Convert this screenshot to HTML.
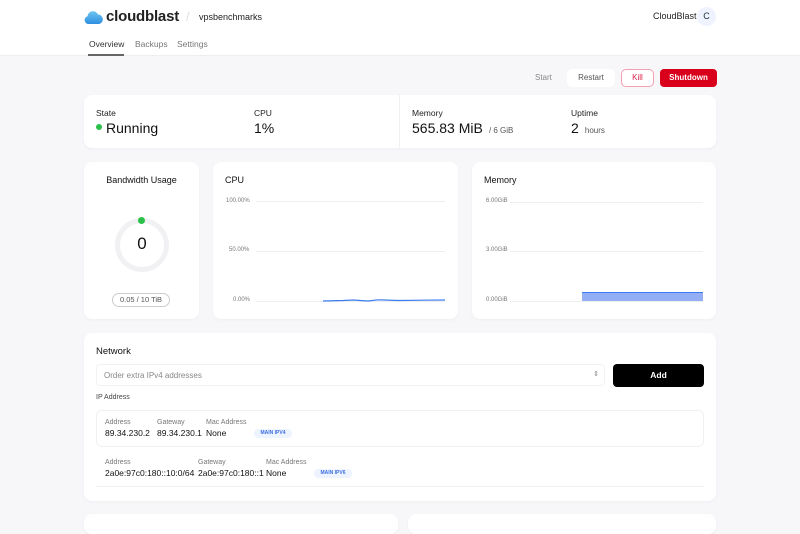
<!DOCTYPE html>
<html><head><style>
*{box-sizing:border-box;margin:0;padding:0}
body{width:800px;height:523px;overflow:hidden;background:#f7f7fa;font-family:"Liberation Sans",sans-serif;color:#111;position:relative}
.a{position:absolute}
.card{position:absolute;background:#fff;border-radius:8px;box-shadow:0 1px 3px rgba(0,0,0,.04)}
.lbl{font-size:8.5px;color:#555}
.sm{font-size:7px;color:#777}
</style></head><body>
<div class="a" style="left:0;top:0;width:800px;height:56px;background:#fff;border-bottom:1px solid #eee"></div>
<svg class="a" style="left:84px;top:9px" width="19" height="16" viewBox="0 0 19 16"><defs><linearGradient id="g" x1="0" y1="0" x2="0" y2="1"><stop offset="0" stop-color="#6cc5f0"/><stop offset="1" stop-color="#2f8fe0"/></linearGradient></defs><path d="M4 15 A4 4 0 0 1 3.5 7.2 A5.5 5.5 0 0 1 14 5.5 A4.8 4.8 0 0 1 15 15 Z" fill="url(#g)"/></svg>
<div class="a" style="left:106px;top:8px;font-size:15px;font-weight:bold;letter-spacing:-.2px;color:#222">cloudblast</div>
<div class="a" style="left:186px;top:9px;font-size:13px;color:#ddd">/</div>
<div class="a" style="left:199px;top:12px;font-size:9px;color:#222">vpsbenchmarks</div>
<div class="a" style="left:653px;top:11px;font-size:9px;color:#222">CloudBlast</div>
<div class="a" style="left:697px;top:7px;width:19px;height:19px;border-radius:50%;background:#eef3ff;font-size:9px;text-align:center;line-height:19px;color:#234">C</div>
<div class="a" style="left:89px;top:39px;font-size:8.5px;color:#333">Overview</div>
<div class="a" style="left:135px;top:39px;font-size:8.5px;color:#777">Backups</div>
<div class="a" style="left:177px;top:39px;font-size:8.5px;color:#777">Settings</div>
<div class="a" style="left:88px;top:54px;width:36px;height:1.5px;background:#666"></div>

<div class="a" style="left:535px;top:73px;font-size:8px;color:#888">Start</div>
<div class="a" style="left:567px;top:69px;width:48px;height:18px;background:#fff;border-radius:5px;font-size:8px;color:#555;text-align:center;line-height:18px">Restart</div>
<div class="a" style="left:621px;top:69px;width:33px;height:18px;border:1px solid #f3a0b0;border-radius:5px;background:#fff;font-size:8px;color:#e0204a;text-align:center;line-height:16px">Kill</div>
<div class="a" style="left:660px;top:69px;width:57px;height:18px;background:#d8001a;border-radius:4px;font-size:8px;color:#fff;font-weight:bold;text-align:center;line-height:18px">Shutdown</div>

<div class="card" style="left:84px;top:95px;width:632px;height:53px"></div>
<div class="a" style="left:399px;top:95px;width:1px;height:53px;background:#f0f0f0"></div>
<div class="a lbl" style="left:96px;top:108px;color:#222">State</div>
<div class="a" style="left:96px;top:124px;width:6px;height:6px;border-radius:50%;background:#2bc04a"></div>
<div class="a" style="left:106px;top:120px;font-size:14px">Running</div>
<div class="a lbl" style="left:254px;top:108px;color:#222">CPU</div>
<div class="a" style="left:254px;top:120px;font-size:14px">1%</div>
<div class="a lbl" style="left:412px;top:108px;color:#222">Memory</div>
<div class="a" style="left:412px;top:120px;font-size:14px">565.83 MiB <span style="font-size:8px;color:#555">&nbsp;/ 6 GiB</span></div>
<div class="a lbl" style="left:571px;top:108px;color:#222">Uptime</div>
<div class="a" style="left:571px;top:120px;font-size:14px">2 <span style="font-size:8px;color:#555">&nbsp;hours</span></div>

<div class="card" style="left:84px;top:162px;width:115px;height:157px"></div>
<div class="a" style="left:84px;top:175px;width:115px;text-align:center;font-size:9px">Bandwidth Usage</div>
<div class="a" style="left:115px;top:218px;width:54px;height:54px;border-radius:50%;border:5px solid #f1f1f3"></div>
<div class="a" style="left:138px;top:217px;width:7px;height:7px;border-radius:50%;background:#2bc04a"></div>
<div class="a" style="left:115px;top:234px;width:54px;text-align:center;font-size:17px">0</div>
<div class="a" style="left:112px;top:293px;width:58px;height:14px;border:1px solid #ccc;border-radius:8px;font-size:7.5px;color:#555;text-align:center;line-height:12px">0.05 / 10 TiB</div>

<div class="card" style="left:213px;top:162px;width:245px;height:157px"></div>
<div class="a" style="left:225px;top:175px;font-size:9px">CPU</div>
<div class="a sm" style="left:226px;top:198px;font-size:6px">100.00%</div>
<div class="a sm" style="left:229px;top:247px;font-size:6px">50.00%</div>
<div class="a sm" style="left:233px;top:297px;font-size:6px">0.00%</div>
<div class="a" style="left:256px;top:201px;width:189px;height:1px;background:#eee"></div>
<div class="a" style="left:256px;top:251px;width:189px;height:1px;background:#eee"></div>
<div class="a" style="left:256px;top:301px;width:189px;height:1px;background:#eee"></div>
<svg class="a" style="left:323px;top:297px" width="122" height="6"><path d="M0 4 L20 3.5 L30 3 L45 4 L55 2.8 L75 3.5 L100 3.2 L122 3" stroke="#3b7df0" stroke-width="1.2" fill="none"/></svg>

<div class="card" style="left:472px;top:162px;width:244px;height:157px"></div>
<div class="a" style="left:484px;top:175px;font-size:9px">Memory</div>
<div class="a sm" style="left:486px;top:198px;font-size:6px">6.00GiB</div>
<div class="a sm" style="left:486px;top:247px;font-size:6px">3.00GiB</div>
<div class="a sm" style="left:486px;top:297px;font-size:6px">0.00GiB</div>
<div class="a" style="left:510px;top:202px;width:193px;height:1px;background:#eee"></div>
<div class="a" style="left:510px;top:251px;width:193px;height:1px;background:#eee"></div>
<div class="a" style="left:510px;top:301px;width:193px;height:1px;background:#eee"></div>
<div class="a" style="left:582px;top:292px;width:121px;height:9px;background:#94aef5;border-top:1.5px solid #3b7df0"></div>

<div class="card" style="left:84px;top:333px;width:632px;height:168px"></div>
<div class="a" style="left:96px;top:346px;font-size:9.5px">Network</div>
<div class="a" style="left:96px;top:364px;width:509px;height:22px;border:1px solid #f2f2f2;border-radius:4px;font-size:8px;color:#888;padding:6px 7px">Order extra IPv4 addresses<span style="position:absolute;right:5px;top:5px;font-size:7px">⇕</span></div>
<div class="a" style="left:613px;top:364px;width:91px;height:23px;background:#000;border-radius:4px;color:#fff;font-size:8.5px;font-weight:bold;text-align:center;line-height:23px">Add</div>
<div class="a" style="left:96px;top:394px;font-size:7px;color:#444">IP Address</div>
<div class="a" style="left:96px;top:410px;width:608px;height:37px;border:1px solid #f0f0f0;border-radius:6px"></div>
<div class="a" style="left:96px;top:450px;width:608px;height:37px;border-bottom:1px solid #f0f0f0"></div>
<div class="a sm" style="left:105px;top:419px">Address</div><div class="a" style="left:105px;top:428px;font-size:8.5px">89.34.230.2</div>
<div class="a sm" style="left:157px;top:419px">Gateway</div><div class="a" style="left:157px;top:428px;font-size:8.5px">89.34.230.1</div>
<div class="a sm" style="left:206px;top:419px">Mac Address</div><div class="a" style="left:206px;top:428px;font-size:8.5px">None</div>
<div class="a" style="left:254px;top:429px;width:38px;height:9px;background:#eef4ff;border-radius:4px;font-size:5px;color:#3b6fe0;font-weight:bold;text-align:center;line-height:9px">MAIN IPV4</div>
<div class="a sm" style="left:105px;top:459px">Address</div><div class="a" style="left:105px;top:468px;font-size:8.5px">2a0e:97c0:180::10:0/64</div>
<div class="a sm" style="left:198px;top:459px">Gateway</div><div class="a" style="left:198px;top:468px;font-size:8.5px">2a0e:97c0:180::1</div>
<div class="a sm" style="left:266px;top:459px">Mac Address</div><div class="a" style="left:266px;top:468px;font-size:8.5px">None</div>
<div class="a" style="left:314px;top:469px;width:38px;height:9px;background:#eef4ff;border-radius:4px;font-size:5px;color:#3b6fe0;font-weight:bold;text-align:center;line-height:9px">MAIN IPV6</div>

<div class="card" style="left:84px;top:514px;width:314px;height:20px"></div>
<div class="card" style="left:408px;top:514px;width:308px;height:20px"></div>
</body></html>
